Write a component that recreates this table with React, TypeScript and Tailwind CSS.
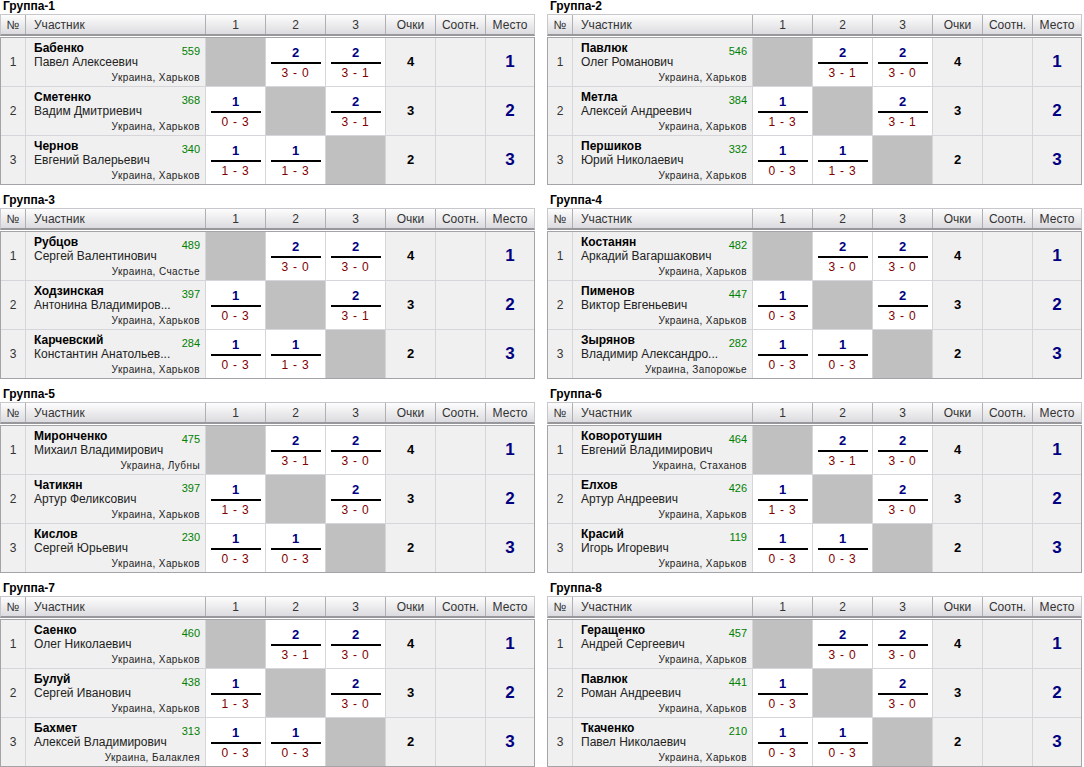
import React from "react";

type Score = [number, string] | null;
type Row = { last: string; first: string; rating: number; city: string; scores: Score[] };
type Group = { title: string; rows: Row[] };

const H = "Украина, Харьков";

const groups: Group[] = [
  {
    title: "Группа-1",
    rows: [
      { last: "Бабенко", first: "Павел Алексеевич", rating: 559, city: H, scores: [null, [2, "3 - 0"], [2, "3 - 1"]] },
      { last: "Сметенко", first: "Вадим Дмитриевич", rating: 368, city: H, scores: [[1, "0 - 3"], null, [2, "3 - 1"]] },
      { last: "Чернов", first: "Евгений Валерьевич", rating: 340, city: H, scores: [[1, "1 - 3"], [1, "1 - 3"], null] },
    ],
  },
  {
    title: "Группа-2",
    rows: [
      { last: "Павлюк", first: "Олег Романович", rating: 546, city: H, scores: [null, [2, "3 - 1"], [2, "3 - 0"]] },
      { last: "Метла", first: "Алексей Андреевич", rating: 384, city: H, scores: [[1, "1 - 3"], null, [2, "3 - 1"]] },
      { last: "Першиков", first: "Юрий Николаевич", rating: 332, city: H, scores: [[1, "0 - 3"], [1, "1 - 3"], null] },
    ],
  },
  {
    title: "Группа-3",
    rows: [
      { last: "Рубцов", first: "Сергей Валентинович", rating: 489, city: "Украина, Счастье", scores: [null, [2, "3 - 0"], [2, "3 - 0"]] },
      { last: "Ходзинская", first: "Антонина Владимиров...", rating: 397, city: H, scores: [[1, "0 - 3"], null, [2, "3 - 1"]] },
      { last: "Карчевский", first: "Константин Анатольев...", rating: 284, city: H, scores: [[1, "0 - 3"], [1, "1 - 3"], null] },
    ],
  },
  {
    title: "Группа-4",
    rows: [
      { last: "Костанян", first: "Аркадий Вагаршакович", rating: 482, city: H, scores: [null, [2, "3 - 0"], [2, "3 - 0"]] },
      { last: "Пименов", first: "Виктор Евгеньевич", rating: 447, city: H, scores: [[1, "0 - 3"], null, [2, "3 - 0"]] },
      { last: "Зырянов", first: "Владимир Александро...", rating: 282, city: "Украина, Запорожье", scores: [[1, "0 - 3"], [1, "0 - 3"], null] },
    ],
  },
  {
    title: "Группа-5",
    rows: [
      { last: "Миронченко", first: "Михаил Владимирович", rating: 475, city: "Украина, Лубны", scores: [null, [2, "3 - 1"], [2, "3 - 0"]] },
      { last: "Чатикян", first: "Артур Феликсович", rating: 397, city: H, scores: [[1, "1 - 3"], null, [2, "3 - 0"]] },
      { last: "Кислов", first: "Сергей Юрьевич", rating: 230, city: H, scores: [[1, "0 - 3"], [1, "0 - 3"], null] },
    ],
  },
  {
    title: "Группа-6",
    rows: [
      { last: "Коворотушин", first: "Евгений Владимирович", rating: 464, city: "Украина, Стаханов", scores: [null, [2, "3 - 1"], [2, "3 - 0"]] },
      { last: "Елхов", first: "Артур Андреевич", rating: 426, city: H, scores: [[1, "1 - 3"], null, [2, "3 - 0"]] },
      { last: "Красий", first: "Игорь Игоревич", rating: 119, city: H, scores: [[1, "0 - 3"], [1, "0 - 3"], null] },
    ],
  },
  {
    title: "Группа-7",
    rows: [
      { last: "Саенко", first: "Олег Николаевич", rating: 460, city: H, scores: [null, [2, "3 - 1"], [2, "3 - 0"]] },
      { last: "Булуй", first: "Сергей Иванович", rating: 438, city: H, scores: [[1, "1 - 3"], null, [2, "3 - 0"]] },
      { last: "Бахмет", first: "Алексей Владимирович", rating: 313, city: "Украина, Балаклея", scores: [[1, "0 - 3"], [1, "0 - 3"], null] },
    ],
  },
  {
    title: "Группа-8",
    rows: [
      { last: "Геращенко", first: "Андрей Сергеевич", rating: 457, city: H, scores: [null, [2, "3 - 0"], [2, "3 - 0"]] },
      { last: "Павлюк", first: "Роман Андреевич", rating: 441, city: H, scores: [[1, "0 - 3"], null, [2, "3 - 0"]] },
      { last: "Ткаченко", first: "Павел Николаевич", rating: 210, city: H, scores: [[1, "0 - 3"], [1, "0 - 3"], null] },
    ],
  },
];

const COLS = "grid grid-cols-[24px_179px_59px_59px_59px_49px_49px_48px]";

function Header() {
  const hc = "bg-linear-to-b from-[#fdfdfd] to-[#dcdce0] flex items-center justify-center text-[12px] text-[#333]";
  return (
    <div className={`${COLS} gap-px bg-[#b0b0b4] border border-[#c8c8cc] border-b-2 border-b-[#98989c] h-[22px]`}>
      <div className={hc}>№</div>
      <div className={`${hc} !justify-start pl-[8px]`}>Участник</div>
      <div className={hc}>1</div>
      <div className={hc}>2</div>
      <div className={hc}>3</div>
      <div className={hc}>Очки</div>
      <div className={hc}>Соотн.</div>
      <div className={hc}>Место</div>
    </div>
  );
}

function ScoreCell({ s }: { s: Score }) {
  if (!s) return <div className="bg-[#c0c0c0]" />;
  return (
    <div className="bg-white flex flex-col items-center pt-[7px]">
      <div className="text-[13px] leading-[15px] font-bold text-[#000080]">{s[0]}</div>
      <div className="mt-[2px] h-[2px] w-[50px] bg-black" />
      <div className="mt-[2px] text-[12px] leading-[14px] text-[#800000] tracking-[0.8px]">{s[1]}</div>
    </div>
  );
}

function Table({ g }: { g: Group }) {
  return (
    <div className="flex flex-col">
      <div className="h-[14px] text-[12px] leading-[13px] font-bold text-black pl-[3px]">{g.title}</div>
      <Header />
      <div className={`${COLS} auto-rows-[48px] gap-px bg-[#d6d6da] border border-[#a4a4a8] mt-px`}>
        {g.rows.map((r, i) => (
          <React.Fragment key={i}>
            <div className="bg-[#f0f0f0] flex items-center justify-center text-[12px] text-[#333]">{i + 1}</div>
            <div className="bg-[#f0f0f0] flex flex-col pl-[8px] pr-[5px] pt-[3px]">
              <div className="flex justify-between items-start">
                <span className="text-[12px] leading-[14px] font-bold text-black">{r.last}</span>
                <span className="text-[11px] leading-[14px] text-[#008000] pt-[3px]">{r.rating}</span>
              </div>
              <div className="-mt-[2px] text-[12px] leading-[12px] text-[#222] whitespace-nowrap">{r.first}</div>
              <div className="mt-[4px] text-[10px] leading-[12px] text-[#222] text-right tracking-[0.4px] whitespace-nowrap">{r.city}</div>
            </div>
            {r.scores.map((s, j) => (
              <ScoreCell key={j} s={s} />
            ))}
            <div className="bg-[#f0f0f0] flex items-center justify-center text-[13px] font-bold text-black">{4 - i}</div>
            <div className="bg-[#f0f0f0]" />
            <div className="bg-[#f0f0f0] flex items-center justify-center text-[17px] font-bold text-[#000080]">{i + 1}</div>
          </React.Fragment>
        ))}
      </div>
    </div>
  );
}

export default function App() {
  return (
    <div className="w-[1084px] h-[767px] bg-white font-['Liberation_Sans',Arial,sans-serif] overflow-hidden">
      <div className="grid grid-cols-[535px_535px] gap-x-[12px] gap-y-[9px]">
        {groups.map((g, i) => (
          <Table key={i} g={g} />
        ))}
      </div>
    </div>
  );
}
